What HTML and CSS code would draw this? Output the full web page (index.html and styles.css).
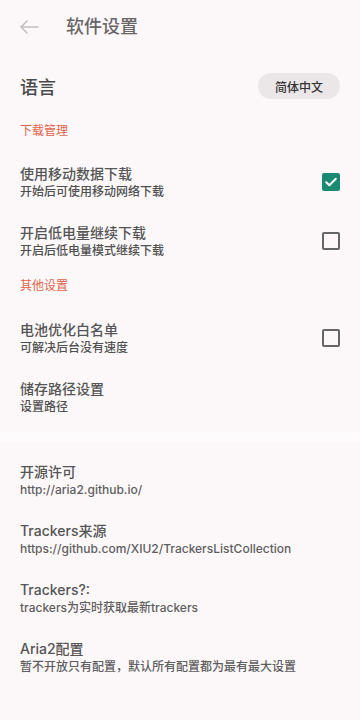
FILE: index.html
```html
<!DOCTYPE html>
<html lang="zh-CN">
<head>
<meta charset="utf-8">
<meta name="viewport" content="width=device-width, initial-scale=1">
<title>软件设置</title>
<link rel="stylesheet" href="styles.css">
</head>
<body>
<div class="page">
  <header class="topbar">
    <svg class="back" width="20" height="14" viewBox="0 0 20 14" aria-hidden="true">
      <path d="M19 7H2M8 1L2 7l6 6" fill="none" stroke="#c4c0c2" stroke-width="1.6" stroke-linecap="round" stroke-linejoin="round"/>
    </svg>
    <h1 class="title">软件设置</h1>
  </header>

  <div class="lang-row">
    <span class="lang-label">语言</span>
    <button class="lang-btn">简体中文</button>
  </div>

  <div class="section-head first">下载管理</div>
  <div class="item">
    <div class="text">
      <div class="item-title">使用移动数据下载</div>
      <div class="item-sub">开始后可使用移动网络下载</div>
    </div>
    <span class="check checked">
      <svg width="14" height="14" viewBox="0 0 14 14" aria-hidden="true"><path d="M2.2 7.2l3.2 3.1L11.8 3.8" fill="none" stroke="#fff" stroke-width="2" stroke-linecap="round" stroke-linejoin="round"/></svg>
    </span>
  </div>
  <div class="item">
    <div class="text">
      <div class="item-title">开启低电量继续下载</div>
      <div class="item-sub">开启后低电量模式继续下载</div>
    </div>
    <span class="check"></span>
  </div>

  <div class="section-head">其他设置</div>
  <div class="item">
    <div class="text">
      <div class="item-title">电池优化白名单</div>
      <div class="item-sub">可解决后台没有速度</div>
    </div>
    <span class="check"></span>
  </div>
  <div class="item">
    <div class="text">
      <div class="item-title">储存路径设置</div>
      <div class="item-sub">设置路径</div>
    </div>
  </div>

  <div class="band"></div>

  <div class="about">
    <div class="item">
      <div class="text">
        <div class="item-title">开源许可</div>
        <div class="item-sub">http://aria2.github.io/</div>
      </div>
    </div>
    <div class="item">
      <div class="text">
        <div class="item-title">Trackers来源</div>
        <div class="item-sub">https://github.com/XIU2/TrackersListCollection</div>
      </div>
    </div>
    <div class="item">
      <div class="text">
        <div class="item-title">Trackers?:</div>
        <div class="item-sub">trackers为实时获取最新trackers</div>
      </div>
    </div>
    <div class="item">
      <div class="text">
        <div class="item-title">Aria2配置</div>
        <div class="item-sub">暂不开放只有配置，默认所有配置都为最有最大设置</div>
      </div>
    </div>
  </div>
</div>
</body>
</html>
```

FILE: styles.css
```css
* { box-sizing: border-box; }
html, body {
  margin: 0;
  padding: 0;
  background: #fcf8fa;
}
body {
  font-family: Inter, "Noto Sans CJK SC", sans-serif;
  color: #555;
  width: 360px;
  min-height: 720px;
}
.page {
  display: flex;
  flex-direction: column;
  min-height: 720px;
}
.topbar {
  height: 54px;
  display: flex;
  align-items: center;
  padding-left: 19px;
}
.back { margin-right: 27px; }
.title {
  margin: 0;
  font-size: 18px;
  font-weight: 500;
  color: #6a6668;
  line-height: 24px;
}
.lang-row {
  margin-top: 18px;
  height: 28px;
  display: flex;
  align-items: center;
  justify-content: space-between;
  padding: 0 20px;
}
.lang-label {
  font-size: 18px;
  font-weight: 500;
  color: #4a4a4a;
}
.lang-btn {
  width: 82px;
  height: 26px;
  border: none;
  border-radius: 13px;
  background: #ebe7e9;
  font-family: inherit;
  font-size: 12px;
  font-weight: 500;
  color: #333;
  padding: 0;
}
.section-head {
  height: 20px;
  line-height: 20px;
  font-size: 12px;
  color: #e2634c;
  padding: 0 20px;
  margin-top: 6px;
  margin-bottom: 12px;
}
.section-head.first {
  margin-top: 21px;
  margin-bottom: 11px;
}
.item {
  display: flex;
  align-items: center;
  justify-content: space-between;
  padding: 12px 20px 11px;
}
.item-title {
  font-size: 14px;
  line-height: 20px;
  font-weight: 500;
  color: #555;
}
.item-sub {
  font-size: 12px;
  line-height: 16px;
  font-weight: 500;
  color: #505050;
}
.check {
  width: 18px;
  height: 18px;
  border: 2px solid #666;
  border-radius: 2px;
  display: flex;
  align-items: center;
  justify-content: center;
}
.check.checked {
  background: #1b8a72;
  border-color: #1b8a72;
}
.band {
  height: 10px;
  margin-top: 6px;
  background: #fdfbfc;
}
.about {
  padding-top: 8px;
}
.about .item-sub {
  color: #5e5e5e;
}
```
